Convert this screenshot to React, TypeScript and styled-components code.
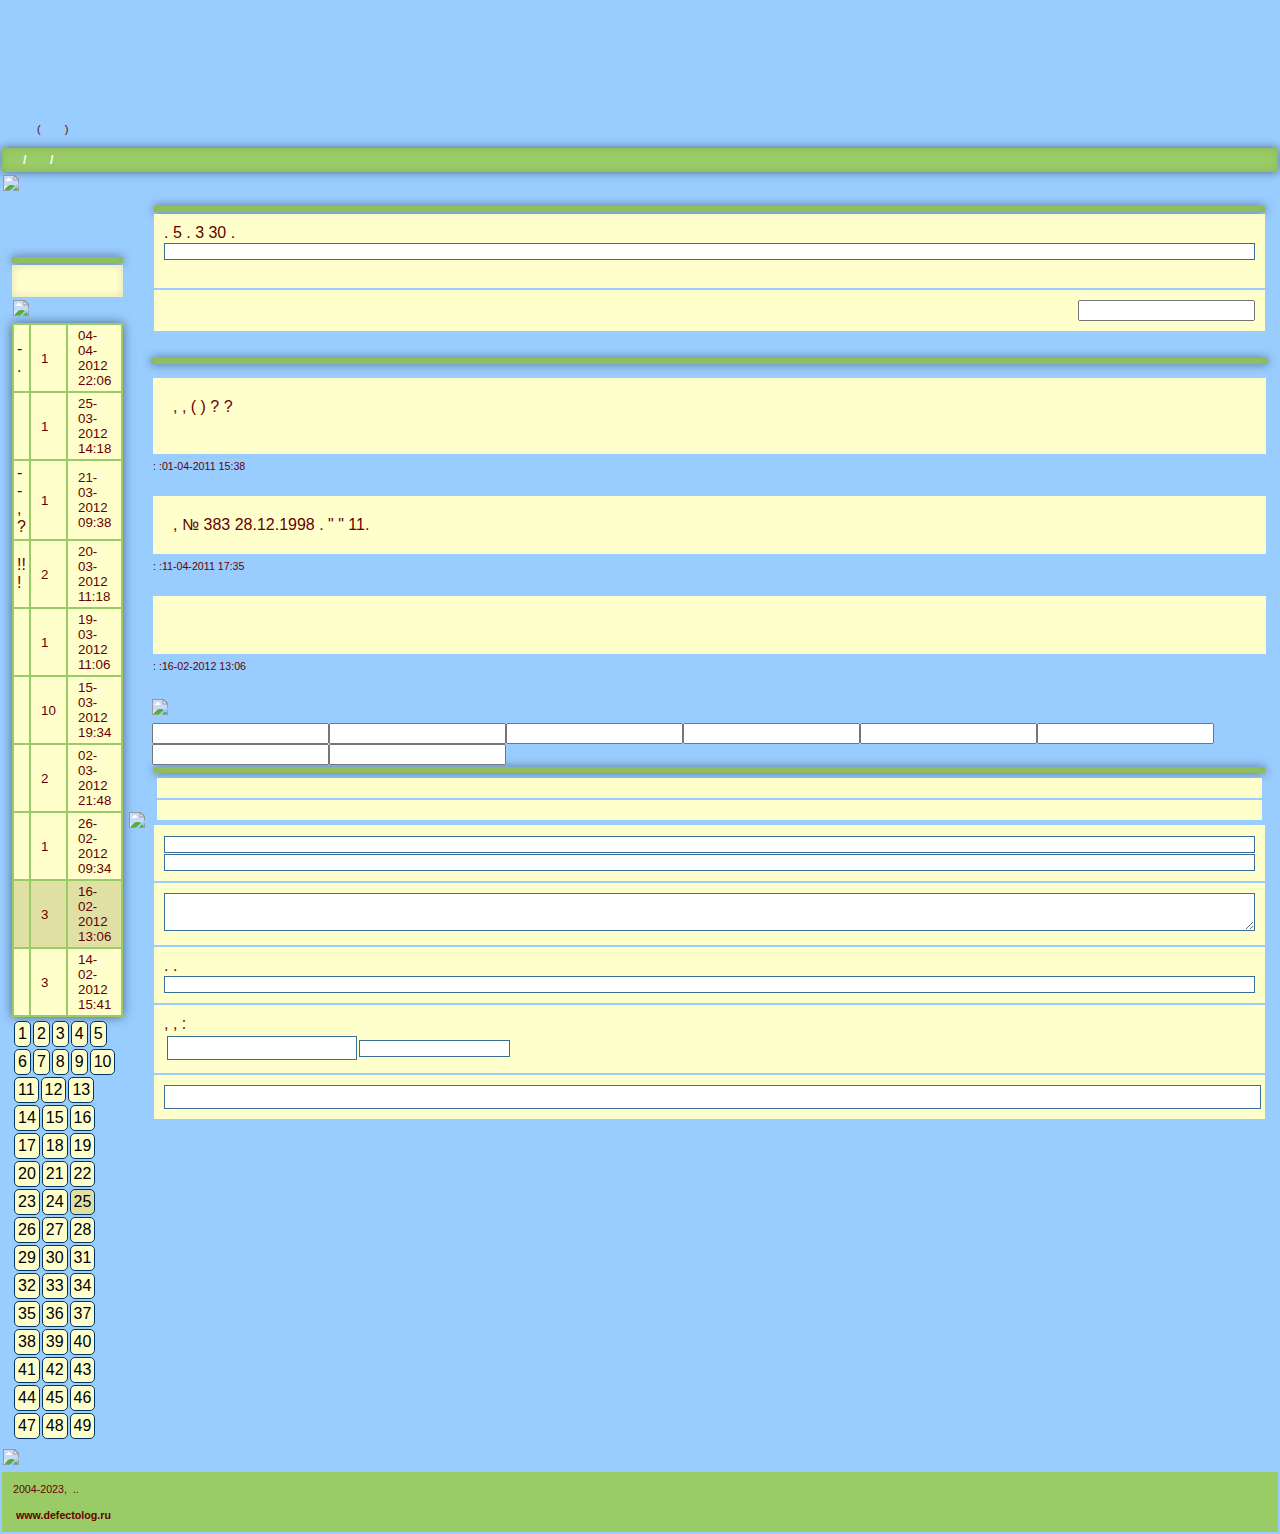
import React from 'react';
import styled, { createGlobalStyle } from 'styled-components';

const sky = '#99ccff';
const leaf = '#99cc66';
const cream = '#ffffcc';
const wine = '#660000';
const fieldLine = '#3b6e96';
const glow = '0 0 10px rgba(0, 0, 0, 0.5)';
const innerGlow = 'inset 0 0 10px rgba(0, 0, 0, 0.12)';

const GlobalStyle = createGlobalStyle`
  body {
    margin: 0;
    background: ${sky};
    color: ${wine};
    font: 16px/18px "Liberation Sans", Arial, sans-serif;
  }
`;

const Page = styled.div`
  display: flex;
  flex-direction: column;
  box-sizing: border-box;
  height: 1534px;
  padding: 2px;
`;

const Header = styled.header`
  display: flex;
  align-items: flex-end;
  gap: 24px;
  box-sizing: border-box;
  height: 146px;
  padding: 0 0 12px 35px;
  font-size: 11px;
  line-height: 13px;
`;

const NavBar = styled.nav`
  display: flex;
  align-items: center;
  gap: 23.7px;
  height: 24px;
  padding-left: 21px;
  background: ${leaf};
  border-radius: 2px;
  box-shadow: ${glow}, ${innerGlow};
  color: #fff;
  font-size: 12px;
  font-weight: bold;
`;

const PictureBox = styled.svg<{ $margin?: string }>`
  display: block;
  flex: none;
  width: 16px;
  height: 16px;
  margin: ${(p) => p.$margin ?? '0'};
`;

const Columns = styled.div`
  display: grid;
  grid-template-columns: 111px 16px 1117px;
  column-gap: 6px;
  height: 1255px;
  padding-left: 10px;
`;

const Sidebar = styled.aside`
  padding-top: 66px;
`;

const Divider = styled.div`
  align-self: center;
  padding-top: 3px;
`;

const Main = styled.main`
  display: flex;
  flex-direction: column;
  padding-top: 15px;
`;

const Strip = styled.div<{ $margin?: string }>`
  flex: none;
  height: 6px;
  margin: ${(p) => p.$margin ?? '0'};
  background: ${leaf};
  border-radius: 1px;
  box-shadow: ${glow}, ${innerGlow};
`;

const MenuBox = styled.div`
  height: 32px;
  margin-top: 2px;
  background: ${cream};
  box-shadow: ${innerGlow};
`;

const TopicTable = styled.table`
  width: 111px;
  table-layout: fixed;
  border-spacing: 2px;
  background: ${leaf};
  box-shadow: ${glow};
`;

const TopicRow = styled.tr<{ $active: boolean }>`
  background: ${(p) => (p.$active ? '#e0e0a4' : cream)};
`;

const TitleCell = styled.td`
  width: 9px;
  padding: 3px;
  white-space: pre;
`;

const CountCell = styled.td`
  width: 15px;
  padding: 3px 10px;
  font-size: 13.33px;
  line-height: 15px;
`;

const DateCell = styled.td`
  width: 33px;
  padding: 3px 10px;
  font-size: 13.33px;
  line-height: 15px;
`;

const Pager = styled.div`
  display: flex;
  flex-wrap: wrap;
  gap: 2px;
  width: 107px;
  padding: 4px 2px 0;
  color: #000;
`;

const PageLink = styled.a<{ $active: boolean }>`
  padding: 3px;
  border: 1px solid #003366;
  border-radius: 5px;
  background: ${(p) => (p.$active ? '#e0e0a4' : cream)};
`;

const Panel = styled.section<{ $height: number; $gap?: number }>`
  flex: none;
  box-sizing: border-box;
  height: ${(p) => p.$height}px;
  margin: ${(p) => p.$gap ?? 2}px 3px 0;
  padding: 10px;
  background: ${cream};
`;

const Row = styled.div`
  flex: none;
  height: 20px;
  margin: 0 6px 2px;
  background: ${cream};
`;

const Field = styled.input<{ $width?: string; $height?: number; $top?: number }>`
  display: block;
  flex: none;
  box-sizing: border-box;
  width: ${(p) => p.$width ?? '100%'};
  height: ${(p) => p.$height ?? 17}px;
  margin: ${(p) => p.$top ?? 1}px 0 0;
  padding: 0;
  border: 1px solid ${fieldLine};
  border-radius: 0;
  background: #fff;
`;

const Area = styled.textarea`
  display: block;
  box-sizing: border-box;
  width: 100%;
  height: 38px;
  margin: 0;
  border: 1px solid ${fieldLine};
  border-radius: 0;
`;

const PlainInput = styled.input`
  display: block;
  box-sizing: border-box;
  width: 177px;
  height: 21px;
  margin: 0;
`;

const AlignRight = styled.div`
  display: flex;
  justify-content: flex-end;
`;

const Buttons = styled.div`
  display: flex;
  flex-wrap: wrap;
  margin: 8px 0 2px 1px;
  isolation: isolate;
`;

const Inline = styled.div`
  display: flex;
  align-items: center;
  gap: 2px;
  padding: 3px 0 0 3px;
`;

const Post = styled.article`
  flex: none;
  margin: 0 2px;
`;

const PostBody = styled.div<{ $height: number }>`
  box-sizing: border-box;
  height: ${(p) => p.$height}px;
  padding: 20px;
  background: ${cream};
`;

const PostMeta = styled.div`
  height: 36px;
  padding-top: 6px;
  font-size: 10.67px;
  line-height: 13px;
`;

const Footer = styled.footer`
  height: 49px;
  margin-top: 7px;
  padding: 11px 11px 0;
  background: ${leaf};
  font-size: 10.67px;
  line-height: 13px;
  white-space: pre;
`;

const Site = styled.strong`
  display: block;
  margin: 13px 0 0 3px;
`;

const topics: [string, string, string][] = [
  ['-\n.', '1', '04-04-2012 22:06'],
  ['', '1', '25-03-2012 14:18'],
  ['-\n-\n,\n?', '1', '21-03-2012 09:38'],
  ['!!\n!', '2', '20-03-2012 11:18'],
  ['', '1', '19-03-2012 11:06'],
  ['', '10', '15-03-2012 19:34'],
  ['', '2', '02-03-2012 21:48'],
  ['', '1', '26-02-2012 09:34'],
  ['', '3', '16-02-2012 13:06'],
  ['', '3', '14-02-2012 15:41'],
];

const posts = [
  { text: ', , ( ) ? ?', date: '01-04-2011 15:38', height: 76 },
  { text: ', № 383 28.12.1998 . " " 11.', date: '11-04-2011 17:35', height: 58 },
  { text: '', date: '16-02-2012 13:06', height: 58 },
];

const pages = Array.from({ length: 49 }, (_, i) => i + 1);

function MissingPicture({ margin }: { margin?: string }) {
  return (
    <PictureBox $margin={margin} viewBox="0 0 16 16">
      <path d="M1 1H11V5H15V8.5L7 15H1Z" fill="#c9daf7" />
      <path d="M1 11H12L7 15H1Z" fill="#dfe8fa" />
      <path d="M2.5 6V5L4 4.5L5 3H7L7.5 4.5H8.5V6Z" fill="#fff" />
      <path d="M2 15V14L5 11L7 10H10L12 11L7.5 15Z" fill="#56ad38" />
      <path d="M10.5 15L13 12.5L14.5 13.5V15Z" fill="#56ad38" />
      <path d="M11 1L15 5H11Z" fill="#eef3fc" />
      <path
        d="M0 0H12L16 4V8.5H15V5.5H10.5V1H1V15H7V16H0ZM11.5 1.5V4.5H14.5ZM15 11.5L16 11V16H10V15H15Z"
        fill="#999"
        fillRule="evenodd"
      />
    </PictureBox>
  );
}

export default function App() {
  return (
    <>
      <GlobalStyle />
      <Page>
        <Header>
          <span>(</span>
          <span>)</span>
        </Header>
        <NavBar>
          <span>/</span>
          <span>/</span>
        </NavBar>
        <MissingPicture margin="3px 0 0 1px" />
        <Columns>
          <Sidebar>
            <Strip />
            <MenuBox />
            <MissingPicture margin="3px 0 7px 1px" />
            <TopicTable>
              <tbody>
                {topics.map(([title, count, date]) => (
                  <TopicRow key={date} $active={date.startsWith('16-02')}>
                    <TitleCell>{title}</TitleCell>
                    <CountCell>{count}</CountCell>
                    <DateCell>{date}</DateCell>
                  </TopicRow>
                ))}
              </tbody>
            </TopicTable>
            <Pager>
              {pages.map((n) => (
                <PageLink key={n} $active={n === 25}>
                  {n}
                </PageLink>
              ))}
            </Pager>
          </Sidebar>
          <Divider>
            <MissingPicture />
          </Divider>
          <Main>
            <Strip $margin="0 3px" />
            <Panel $height={74}>
              . 5 . 3 30 .
              <Field />
            </Panel>
            <Panel $height={41}>
              <AlignRight>
                <PlainInput />
              </AlignRight>
            </Panel>
            <Strip $margin="27px 0 14px" />
            {posts.map((post) => (
              <Post key={post.date}>
                <PostBody $height={post.height}>{post.text}</PostBody>
                <PostMeta>: :{post.date}</PostMeta>
              </Post>
            ))}
            <MissingPicture margin="3px 0 0 1px" />
            <Buttons>
              {pages.slice(0, 8).map((n) => (
                <PlainInput key={n} />
              ))}
            </Buttons>
            <Strip $margin="0 3px 5px" />
            <Row />
            <Row />
            <Panel $height={56} $gap={3}>
              <Field />
              <Field />
            </Panel>
            <Panel $height={62}>
              <Area />
            </Panel>
            <Panel $height={56}>
              . .
              <Field />
            </Panel>
            <Panel $height={68}>
              , , :
              <Inline>
                <Field $width="190px" $height={24} $top={0} />
                <Field $width="151px" $top={0} />
              </Inline>
            </Panel>
            <Panel $height={44}>
              <Field $width="1097px" $height={24} $top={0} />
            </Panel>
          </Main>
        </Columns>
        <MissingPicture margin="3px 0 0 1px" />
        <Footer>
          {'2004-2023,  ..'}
          <Site>www.defectolog.ru</Site>
        </Footer>
      </Page>
    </>
  );
}
